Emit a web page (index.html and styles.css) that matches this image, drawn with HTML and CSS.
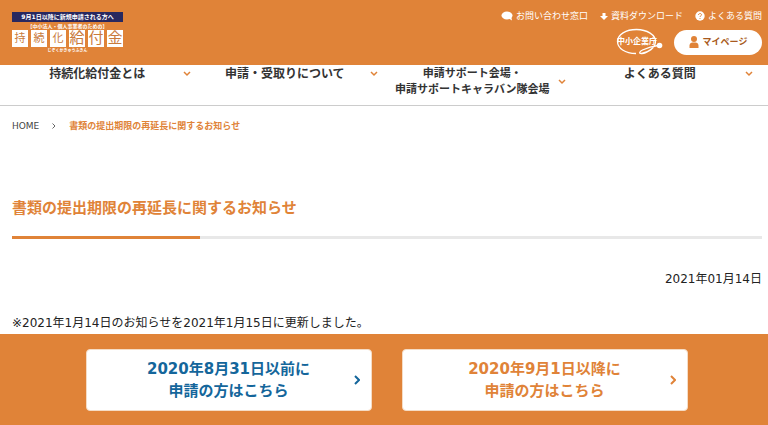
FILE: index.html
```html
<!DOCTYPE html>
<html lang="ja">
<head>
<meta charset="utf-8">
<meta name="viewport" content="width=device-width, initial-scale=1">
<title>書類の提出期限の再延長に関するお知らせ</title>
<link rel="stylesheet" href="styles.css">
</head>
<body>
<header class="header">
  <a class="logo" href="#">
    <span class="logo-flag">9月1日以降に新規申請される方へ</span>
    <span class="logo-lead">【中小法人・個人事業者のための】</span>
    <span class="logo-tiles">
      <span class="tile">持</span><span class="tile">続</span><span class="tile">化</span><span class="tile tile-large">給</span><span class="tile tile-large">付</span><span class="tile tile-large">金</span>
    </span>
    <span class="logo-kana">じぞくかきゅうふきん</span>
  </a>
  <div class="header-side">
    <ul class="links">
      <li><a href="#"><svg width="12" height="10" viewBox="0 0 12 10"><ellipse cx="6" cy="4.500" rx="5.500" ry="4" fill="#fff"/><path d="M7 7l4 2.500-.8-4z" fill="#fff"/></svg>お問い合わせ窓口</a></li>
      <li><a href="#"><svg width="8" height="10" viewBox="0 0 8 10"><path d="M2.500 2h3v3H8L4 9 0 5h2.500z" fill="#fff"/></svg>資料ダウンロード</a></li>
      <li><a href="#"><svg width="10" height="10" viewBox="0 0 10 10"><circle cx="5" cy="5" r="4.700" fill="#fff"/><path d="M3.500 4c0-2 3-2 3-.2C6.500 4.900 5 4.800 5 6" fill="none" stroke="#e08338"/><circle cx="5" cy="7.500" r=".6" fill="#e08338"/></svg>よくある質問</a></li>
    </ul>
    <div class="account">
      <a class="agency" href="#" aria-label="中小企業庁">
        <svg width="48" height="28" viewBox="0 0 48 28"><path d="M20 25.500C9 25.500 1.500 20 1.500 13.500 1.500 6.500 10 1.500 20.500 1.500S40 7 39.500 14c-.5 6-7 10.500-14 11.500-3 .2-2-2 1-3.500C32 19.500 38 18 42 17.500M26 25.500c5 0 8-4 12-6.500" fill="none" stroke="#fff" stroke-width="1.300"/><circle cx="43.500" cy="17.500" r="2.800" fill="#fff"/><text class="agency-name" x="21" y="16" text-anchor="middle">中小企業庁</text></svg>
      </a>
      <a class="mypage" href="#"><svg width="10" height="12" viewBox="0 0 10 12"><circle cx="5" cy="3" r="3" fill="#e08338"/><path d="M.5 12V9.500C.5 7.500 2 6.500 3.500 6.500h3c1.500 0 3 1 3 3V12z" fill="#e08338"/></svg>マイページ</a>
    </div>
  </div>
</header>
<nav class="nav">
  <a href="#"><span>持続化給付金とは</span><svg class="arrow" width="8" height="6" viewBox="0 0 8 6"><path d="M1 1l3 3 3-3"/></svg></a>
  <a href="#"><span>申請・受取りについて</span><svg class="arrow" width="8" height="6" viewBox="0 0 8 6"><path d="M1 1l3 3 3-3"/></svg></a>
  <a class="nav-small" href="#"><span>申請サポート会場・<br>申請サポートキャラバン隊会場</span><svg class="arrow" width="8" height="6" viewBox="0 0 8 6"><path d="M1 1l3 3 3-3"/></svg></a>
  <a href="#"><span>よくある質問</span><svg class="arrow" width="8" height="6" viewBox="0 0 8 6"><path d="M1 1l3 3 3-3"/></svg></a>
</nav>
<main class="main">
  <ol class="crumbs">
    <li><a href="#">HOME</a></li>
    <li><svg width="4" height="6" viewBox="0 0 4 6"><path d="M.5.5L3 3 .5 5.500" fill="none" stroke="#666"/></svg></li>
    <li class="current">書類の提出期限の再延長に関するお知らせ</li>
  </ol>
  <h1 class="title">書類の提出期限の再延長に関するお知らせ</h1>
  <p class="date">2021年01月14日</p>
  <p class="note">※2021年1月14日のお知らせを2021年1月15日に更新しました。</p>
</main>
<footer class="footer">
  <a class="choice choice-blue" href="#"><span>2020年8月31日以前に<br>申請の方はこちら</span><svg width="6" height="10" viewBox="0 0 6 10"><path d="M1 1l4 4-4 4"/></svg></a>
  <a class="choice" href="#"><span>2020年9月1日以降に<br>申請の方はこちら</span><svg width="6" height="10" viewBox="0 0 6 10"><path d="M1 1l4 4-4 4"/></svg></a>
</footer>
</body>
</html>
```
FILE: styles.css
```css
* {
  box-sizing: border-box;
}

body {
  margin: 0;
  min-height: 100vh;
  display: flex;
  flex-direction: column;
  background: #fff;
  color: #222;
  font: 12px/16px "DejaVu Sans", "Noto Sans CJK JP", sans-serif;
}

a {
  color: inherit;
  text-decoration: none;
}

ul, ol, p, h1 {
  margin: 0;
  padding: 0;
  list-style: none;
}

svg {
  flex: none;
}

.header {
  display: flex;
  justify-content: space-between;
  align-items: flex-start;
  padding: 0 6px 9px 12px;
  background: #e08338;
  color: #fff;
}

.logo {
  display: flex;
  flex-direction: column;
  width: 111px;
  padding-top: 12px;
  text-align: center;
  white-space: nowrap;
}

.logo-flag {
  background: #28285f;
  font-size: 6px;
  font-weight: 700;
  line-height: 10px;
}

.logo-lead {
  font-size: 5px;
  font-weight: 700;
  line-height: 8px;
}

.logo-tiles {
  display: flex;
  justify-content: space-between;
}

.tile {
  width: 16px;
  height: 17px;
  background: #fff;
  color: #c97a3c;
  font-size: 11px;
  line-height: 17px;
}

.tile-large {
  font-size: 15px;
}

.logo-kana {
  font-size: 4px;
  font-weight: 700;
  line-height: 7px;
}

.header-side {
  display: flex;
  flex-direction: column;
  align-items: flex-end;
  gap: 4px;
  padding-top: 8px;
}

.links {
  display: flex;
  gap: 12px;
  font-size: 9px;
}

.links a {
  display: flex;
  align-items: center;
  gap: 3px;
}

.account {
  display: flex;
  align-items: center;
  gap: 10px;
}

.agency,
.agency svg {
  display: block;
}

.agency-name {
  fill: #fff;
  font-size: 8px;
  font-weight: 700;
}

.mypage {
  display: flex;
  align-items: center;
  justify-content: center;
  gap: 4px;
  width: 88px;
  height: 25px;
  border-radius: 13px;
  background: #fff;
  color: #a85a20;
  font-size: 9px;
  font-weight: 700;
}

.nav {
  display: grid;
  grid-template-columns: repeat(4, 1fr);
  align-items: start;
  padding: 1px 6px 7px 12px;
  border-bottom: 1px solid #ccc;
  font-weight: 700;
  color: #333;
  text-align: center;
}

.nav a {
  display: flex;
  align-items: center;
  padding-right: 9px;
}

.nav span {
  flex: 1;
  white-space: nowrap;
}

.nav .nav-small {
  font-size: 11px;
}

.arrow {
  fill: none;
  stroke: #e08338;
  stroke-width: 1.5;
}

.main {
  flex: 1;
  padding: 12px 6px 0 12px;
}

.crumbs {
  display: flex;
  align-items: center;
  gap: 13px;
  font-size: 9px;
  color: #444;
}

.crumbs li {
  display: flex;
}

.crumbs .current {
  color: #e08338;
  font-weight: 700;
}

.title {
  position: relative;
  margin-top: 62px;
  padding-bottom: 16px;
  border-bottom: 3px solid #e8e8e8;
  color: #e08338;
  font-size: 15px;
  line-height: 24px;
}

.title::after {
  content: "";
  position: absolute;
  left: 0;
  bottom: -3px;
  width: 25%;
  height: 3px;
  background: #e08338;
}

.date {
  margin-top: 32px;
  text-align: right;
}

.note {
  margin-top: 28px;
}

.footer {
  display: grid;
  grid-template-columns: 1fr 1fr;
  gap: 30px;
  padding: 15px 80px 14px 86px;
  background: #e08338;
}

.choice {
  display: flex;
  align-items: center;
  padding: 8px 11px 8px 16px;
  border: 1px solid #f5dcc5;
  border-radius: 4px;
  background: #fff;
  color: #e08338;
  font-size: 15px;
  font-weight: 700;
  line-height: 22px;
  text-align: center;
}

.choice span {
  flex: 1;
}

.choice svg {
  fill: none;
  stroke: currentColor;
  stroke-width: 2;
}

.choice-blue {
  color: #14669b;
}
```
